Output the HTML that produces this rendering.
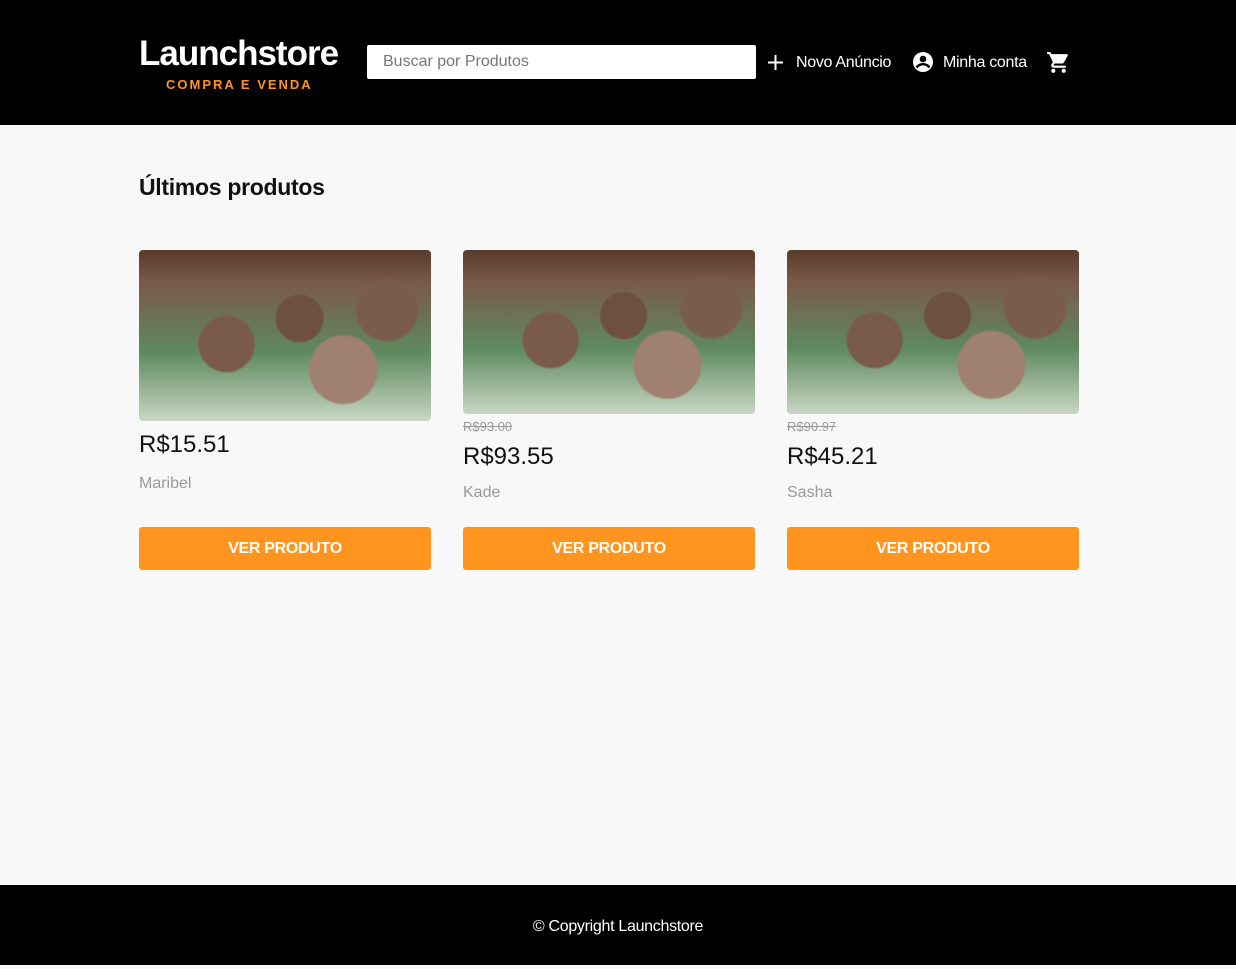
<!DOCTYPE html>
<html><head><meta charset="utf-8"><style>
*{margin:0;padding:0;box-sizing:border-box}
body{width:1236px;height:965px;background:#f8f8f8;font-family:"Liberation Sans",sans-serif;position:relative;overflow:hidden}
header{position:absolute;top:0;left:0;width:1236px;height:125px;background:#000}
.logo{position:absolute;left:139px;top:34px;color:#fff;font-size:35px;font-weight:bold;letter-spacing:-1px}
.sub{position:absolute;left:166px;top:77px;color:#ff951f;font-size:13px;font-weight:bold;letter-spacing:2px}
.search{position:absolute;left:367px;top:45px;width:389px;height:34px;background:#fff;border-radius:2px;color:#777;font-size:16px;padding:8px 16px}
.nav{position:absolute;top:54px;color:#fff;font-size:16px;letter-spacing:-0.3px}
h2{position:absolute;left:139px;top:174px;font-size:23px;color:#111;letter-spacing:-0.3px}
.card{position:absolute;top:250px;width:292px}
.img{width:292px;border-radius:4px;background:
radial-gradient(circle at 30% 55%,#7a5a48 0 12%,transparent 13%),
radial-gradient(circle at 70% 70%,#a08070 0 14%,transparent 15%),
radial-gradient(circle at 55% 40%,#6e5040 0 12%,transparent 13%),
radial-gradient(circle at 85% 35%,#7a5c4c 0 11%,transparent 12%),
linear-gradient(180deg,#5a3a2a 0,#7a5a4a 20%,#5e8a5e 60%,#c9d7c4 100%)}
.old{font-size:13px;color:#999;text-decoration:line-through;margin-top:5px;height:16px}
.price{font-size:24px;color:#111}
.name{font-size:16px;color:#999}
.btn{position:absolute;top:277px;left:0;width:292px;height:43px;background:#ff951f;border-radius:3px;color:#fff;font-weight:bold;font-size:16px;text-align:center;line-height:43px;letter-spacing:-0.3px}
footer{position:absolute;top:885px;left:0;width:1236px;height:80px;background:#000;color:#fff;text-align:center;line-height:84px;font-size:16px;letter-spacing:-0.3px}
</style></head><body>
<header>
<div class="logo">Launchstore</div>
<div class="sub">COMPRA E VENDA</div>
<div class="search">Buscar por Produtos</div>
<svg style="position:absolute;left:767px;top:54px" width="17" height="17" viewBox="0 0 17 17"><path d="M8.5 1v15M1 8.5h15" stroke="#fff" stroke-width="2"/></svg>
<div class="nav" style="left:796px">Novo Anúncio</div>
<svg style="position:absolute;left:911px;top:50px" width="24" height="24" viewBox="0 0 24 24"><circle cx="12" cy="12" r="10" fill="#fff"/><circle cx="12" cy="9" r="3.3" fill="#000"/><path d="M5.5 17.5c1.8-2.5 4-3.3 6.5-3.3s4.7.8 6.5 3.3" stroke="#000" stroke-width="2.4" fill="none"/></svg>
<div class="nav" style="left:943px">Minha conta</div>
<svg style="position:absolute;left:1046px;top:50px" width="25" height="25" viewBox="0 0 24 24"><path fill="#fff" d="M7 18c-1.1 0-2 .9-2 2s.9 2 2 2 2-.9 2-2-.9-2-2-2zM1 2v2h2l3.6 7.6-1.4 2.4c-.1.3-.2.6-.2 1 0 1.1.9 2 2 2h12v-2H7.4c-.1 0-.2-.1-.2-.2v-.1l.9-1.7h7.4c.8 0 1.4-.4 1.7-1l3.6-6.5c.1-.2.1-.3.1-.5 0-.6-.4-1-1-1H5.2l-.9-2H1zm16 16c-1.1 0-2 .9-2 2s.9 2 2 2 2-.9 2-2-.9-2-2-2z"/></svg>
</header>
<h2>Últimos produtos</h2>
<div class="card" style="left:139px"><div class="img" style="height:171px"></div><div class="price" style="margin-top:10px">R$15.51</div><div class="name" style="margin-top:16px">Maribel</div><div class="btn">VER PRODUTO</div></div>
<div class="card" style="left:463px"><div class="img" style="height:164px"></div><div class="old">R$93.00</div><div class="price" style="margin-top:8px">R$93.55</div><div class="name" style="margin-top:13px">Kade</div><div class="btn">VER PRODUTO</div></div>
<div class="card" style="left:787px"><div class="img" style="height:164px"></div><div class="old">R$90.97</div><div class="price" style="margin-top:8px">R$45.21</div><div class="name" style="margin-top:13px">Sasha</div><div class="btn">VER PRODUTO</div></div>
<footer>© Copyright Launchstore</footer>
</body></html>
